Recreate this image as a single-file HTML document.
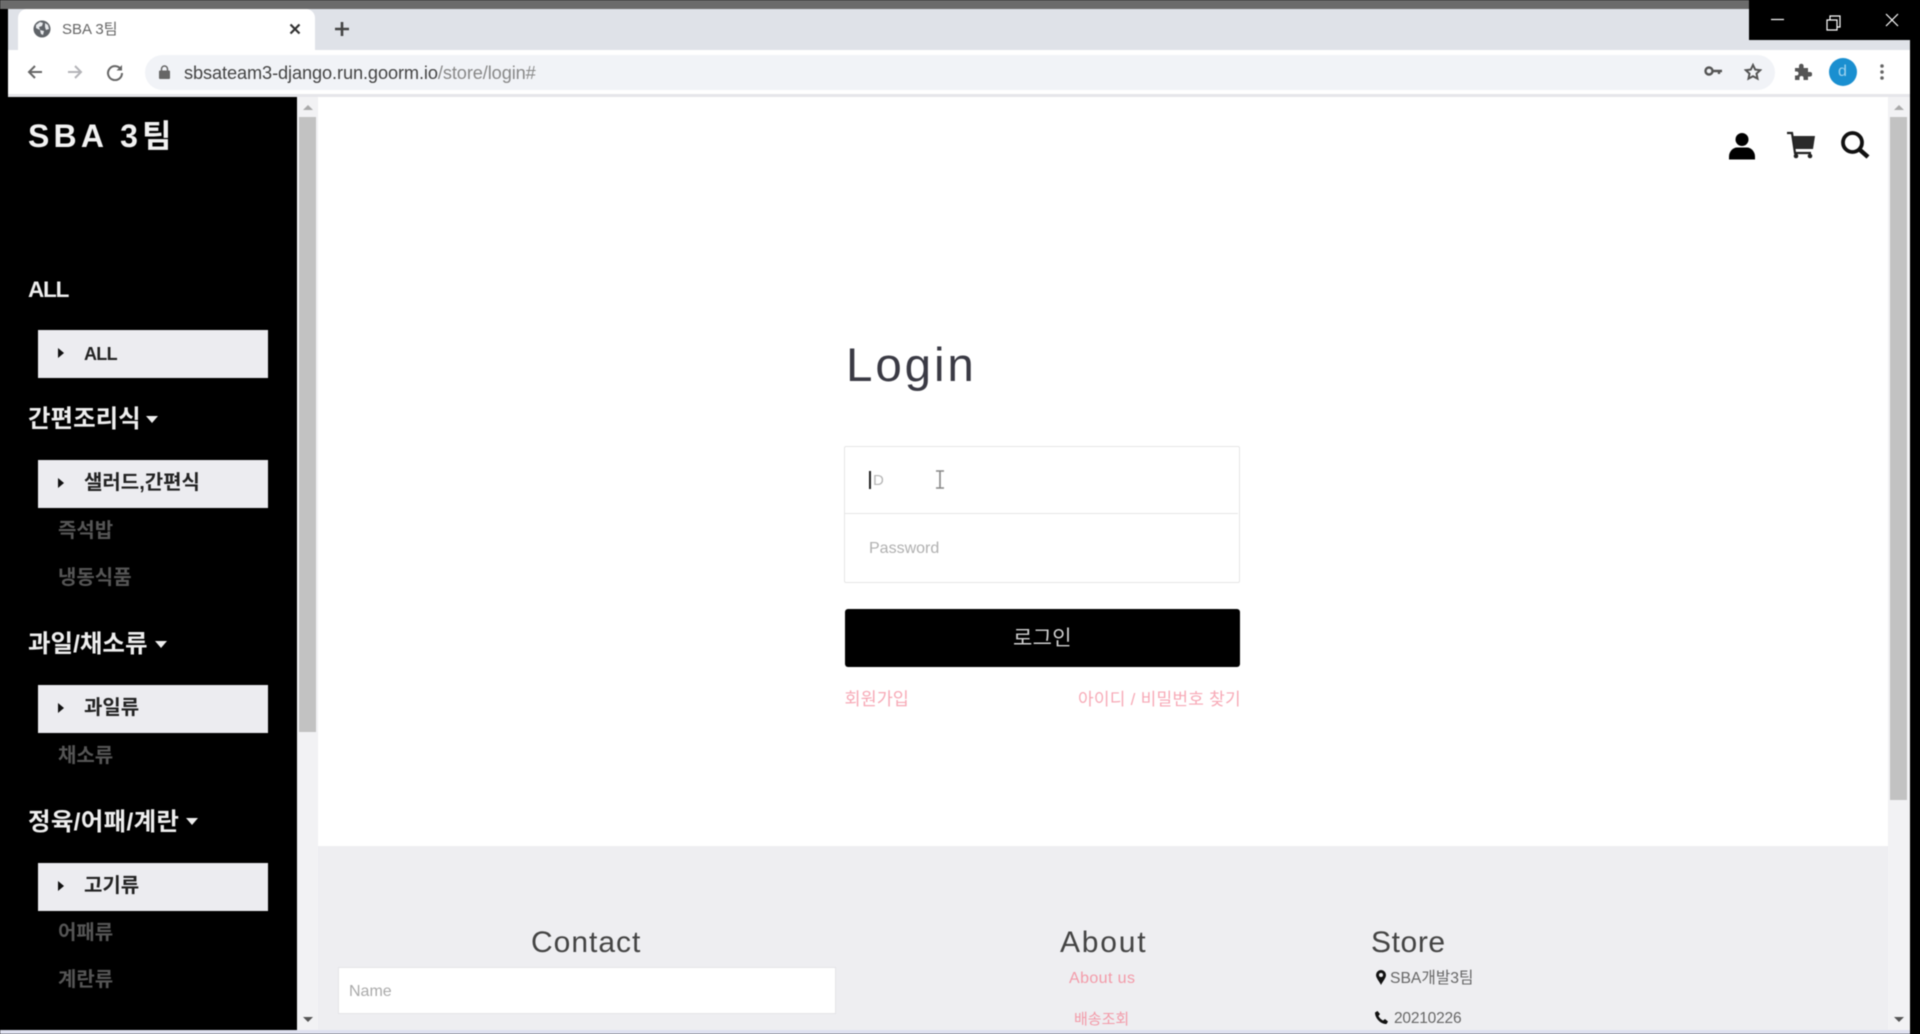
<!DOCTYPE html>
<html lang="ko"><head><meta charset="utf-8"><title>SBA 3팀</title>
<style>
html,body{margin:0;padding:0;width:1920px;height:1034px;overflow:hidden;background:#000}
body{position:relative;font-family:"Liberation Sans","Noto Sans CJK KR",sans-serif;filter:blur(.45px)}
.a{position:absolute}
.t{position:absolute;white-space:nowrap;line-height:1}
.box{position:absolute;left:38px;width:230px;height:48px;background:#ececf0}
.tri{position:absolute;left:58px;width:0;height:0;border-left:6px solid #111;border-top:5px solid transparent;border-bottom:5px solid transparent}
.cat{color:#eee;font-size:24.5px;font-weight:700;left:28px}
.sub{font-size:20px;font-weight:700;left:84px;color:#222}
.mut{color:#555;font-size:20px;font-weight:700;left:58px}
.car{position:absolute;width:0;height:0;border-top:7px solid #eee;border-left:6.5px solid transparent;border-right:6.5px solid transparent}
.ft{color:#444;font-size:30px;letter-spacing:.8px}
.pk{color:#f39aa8;font-size:15px}
</style></head><body>

<!-- window frame -->
<div class="a" style="left:0;top:0;width:1920px;height:9px;background:#6b6b6b"></div>
<div class="a" style="left:8px;top:9px;width:1902px;height:41px;background:#dfe2e8"></div>
<div class="a" style="left:1749px;top:0;width:171px;height:40px;background:#000"></div>
<div class="a" style="left:1910px;top:40px;width:10px;height:994px;background:#000"></div>

<!-- window controls -->
<svg class="a" style="left:1749px;top:0" width="171" height="40" fill="none" stroke="#fff" stroke-width="1.2">
<path d="M22 19.5H35"/>
<path d="M78 20h10v10h-10zM81 20v-4h10v11h-3"/>
<path d="M137 14l12 12M149 14l-12 12"/>
</svg>

<!-- tab -->
<div class="a" style="left:18px;top:9px;width:297px;height:41px;background:#fff;border-radius:9px 9px 0 0"></div>
<svg class="a" style="left:33px;top:20px" width="18" height="18" viewBox="0 0 18 18">
<circle cx="9" cy="9" r="8.5" fill="#5f6368"/>
<path d="M3 5l4-3 3 1-1 3-3 1 1 3 4 1-1 4-2-1-1-4-4-2zM12 3l3 2 1 4-3 1-1-3z" fill="#e8eaed"/>
</svg>
<div class="t" style="left:62px;top:22px;font-size:15px;color:#666">SBA 3팀</div>
<svg class="a" style="left:289px;top:23px" width="12" height="12" stroke="#333" stroke-width="2.2"><path d="M1.5 1.5l9 9M10.5 1.5l-9 9"/></svg>
<svg class="a" style="left:334px;top:21px" width="16" height="16" stroke="#444" stroke-width="2.6"><path d="M8 1v14M1 8h14"/></svg>

<!-- toolbar -->
<div class="a" style="left:8px;top:50px;width:1902px;height:45px;background:#fff"></div>
<div class="a" style="left:8px;top:94px;width:1902px;height:3px;background:#e6e6ea"></div>
<div class="a" style="left:145px;top:55px;width:1630px;height:35px;border-radius:18px;background:#f1f3f7"></div>
<svg class="a" style="left:26px;top:63px" width="18" height="18" fill="none" stroke="#666" stroke-width="2"><path d="M16 9H3M9 3L3 9l6 6"/></svg>
<svg class="a" style="left:66px;top:63px" width="18" height="18" fill="none" stroke="#b4b4b8" stroke-width="2"><path d="M2 9h13M9 3l6 6-6 6"/></svg>
<svg class="a" style="left:106px;top:63px" width="18" height="18" fill="none" stroke="#666" stroke-width="2"><path d="M15 6.5A7 7 0 1 0 16 10"/><path d="M16 2v5.5h-5.500z" fill="#666" stroke="none"/></svg>
<svg class="a" style="left:159px;top:65px" width="11" height="14" fill="#666"><rect x="0" y="5.500" width="11" height="8.500" rx="1"/><path d="M2.500 6V4a3 3 0 0 1 6 0v2" fill="none" stroke="#666" stroke-width="1.500"/></svg>
<div class="t" style="left:184px;top:63.500px;font-size:18.200px;letter-spacing:-.1px;color:#444">sbsateam3-django.run.goorm.io<span style="color:#888">/store/login#</span></div>

<svg class="a" style="left:1704px;top:65px" width="19" height="14" fill="none" stroke="#555" stroke-width="2.400"><circle cx="5" cy="6" r="3.500"/><path d="M8 6h10M15 6v3"/></svg>
<svg class="a" style="left:1744px;top:63px" width="18" height="18" fill="none" stroke="#555" stroke-width="2"><path d="M9 2l2.200 4.600 5 .6-3.700 3.400 1 5L9 13.200 4.500 15.600l1-5L1.800 7.200l5-.6z"/></svg>
<svg class="a" style="left:1794px;top:63px" width="18" height="18" fill="#555"><path d="M1 5h4V3a2.300 2.300 0 0 1 4.600 0v2h4.400v4h2a2.300 2.300 0 0 1 0 4.600h-2V17H9.500v-2a2 2 0 0 0-4 0v2H1v-4.500h1.500a2 2 0 0 0 0-4H1z"/></svg>
<div class="a" style="left:1829px;top:58px;width:28px;height:28px;border-radius:50%;background:#1a8fd0"></div>
<div class="t" style="left:1838px;top:64px;font-size:16px;color:#9fd3ef">d</div>
<svg class="a" style="left:1879px;top:63px" width="6" height="18" fill="#666"><circle cx="3" cy="3" r="1.800"/><circle cx="3" cy="9" r="1.800"/><circle cx="3" cy="15" r="1.800"/></svg>

<!-- sidebar -->
<div class="a" style="left:0;top:97px;width:297px;height:933px;background:#000"></div>
<div class="t" style="left:28px;top:120px;font-size:32px;font-weight:700;letter-spacing:4.200px;color:#f2f2f2">SBA 3팀</div>

<div class="t cat" style="top:278.500px;font-size:22.500px;letter-spacing:-1.200px">ALL</div>
<div class="box" style="top:330px"></div><div class="tri" style="top:348px"></div>
<div class="t sub" style="top:345px;font-size:18px;letter-spacing:-.7px">ALL</div>

<div class="t cat" style="top:408px">간편조리식</div>
<div class="car" style="left:146px;top:415.500px"></div>
<div class="box" style="top:460px"></div><div class="tri" style="top:478px"></div>
<div class="t sub" style="top:473px">샐러드,간편식</div>
<div class="t mut" style="top:521px">즉석밥</div>
<div class="t mut" style="top:568px">냉동식품</div>

<div class="t cat" style="top:633px">과일/채소류</div>
<div class="car" style="left:155px;top:640.500px"></div>
<div class="box" style="top:685px"></div><div class="tri" style="top:703px"></div>
<div class="t sub" style="top:698px">과일류</div>
<div class="t mut" style="top:745.500px">채소류</div>

<div class="t cat" style="top:810.500px;letter-spacing:.3px">정육/어패/계란</div>
<div class="car" style="left:186px;top:818px"></div>
<div class="box" style="top:862.500px"></div><div class="tri" style="top:880.500px"></div>
<div class="t sub" style="top:875.500px">고기류</div>
<div class="t mut" style="top:922.500px">어패류</div>
<div class="t mut" style="top:970px">계란류</div>

<!-- page background -->
<div class="a" style="left:297px;top:97px;width:1613px;height:933px;background:#eeeef1"></div>
<div class="a" style="left:318px;top:97px;width:1570px;height:749px;background:#fff"></div>
<div class="a" style="left:0;top:1030px;width:1910px;height:4px;background:#dfe1f0"></div>

<!-- left scrollbar -->
<div class="a" style="left:297px;top:97px;width:21px;height:933px;background:#f2f2f4"></div>
<div class="a" style="left:299px;top:117px;width:17px;height:615px;background:#c2c2c2"></div>
<div class="a" style="left:303px;top:105px;border-bottom:5px solid #aaa;border-left:5px solid transparent;border-right:5px solid transparent"></div>
<div class="a" style="left:303px;top:1017px;border-top:5px solid #555;border-left:5px solid transparent;border-right:5px solid transparent"></div>

<!-- right scrollbar -->
<div class="a" style="left:1888px;top:97px;width:22px;height:933px;background:#f2f2f4"></div>
<div class="a" style="left:1890px;top:117px;width:17px;height:683px;background:#c2c2c2"></div>
<div class="a" style="left:1894px;top:105px;border-bottom:5px solid #aaa;border-left:5px solid transparent;border-right:5px solid transparent"></div>
<div class="a" style="left:1894px;top:1017px;border-top:5px solid #555;border-left:5px solid transparent;border-right:5px solid transparent"></div>

<!-- header icons -->
<svg class="a" style="left:1728px;top:130px" width="28" height="32" fill="#000"><circle cx="14" cy="9.500" r="6.500"/><path d="M1 29.500v-3c0-5 4-9 8-9h10c4 0 8 4 8 9v3z"/></svg>
<svg class="a" style="left:1785.500px;top:130px" width="30" height="30"><path d="M1 3h5l3 20h16" fill="none" stroke="#222" stroke-width="2.200"/><path d="M7 6h22l-2 13H9z" fill="#2a2a2a"/><circle cx="10" cy="26" r="2.300" fill="#222"/><circle cx="24" cy="26" r="2.300" fill="#222"/></svg>
<svg class="a" style="left:1840px;top:130px" width="30" height="30" fill="none" stroke="#111"><circle cx="12.500" cy="12.500" r="9.500" stroke-width="3.800"/><path d="M19.500 19.500l8.500 7.500" stroke-width="4.500"/></svg>

<!-- login -->
<div class="t" style="left:846px;top:341.500px;font-size:47.500px;letter-spacing:2.900px;color:#3a3a44">Login</div>
<div class="a" style="left:844px;top:446px;width:394px;height:135px;border:1px solid #e6e6e6;border-radius:2px"></div>
<div class="a" style="left:845px;top:513px;width:393px;height:1px;background:#e6e6e6"></div>
<div class="a" style="left:869px;top:471px;width:2px;height:18px;background:#222"></div>
<div class="t" style="left:873px;top:473px;font-size:15px;color:#b5b5b5">D</div>
<svg class="a" style="left:934.500px;top:470px" width="10" height="19" fill="none" stroke="#888" stroke-width="1.600"><path d="M1 1h8M5 1v17M1 18h8"/></svg>
<div class="t" style="left:869px;top:541px;font-size:16px;color:#b0b0b0">Password</div>
<div class="a" style="left:844.500px;top:609px;width:395.500px;height:58px;background:#000;border-radius:3px"></div>
<div class="t" style="left:1013px;top:627.500px;font-size:21px;color:#d0d0d0;letter-spacing:.3px">로그인</div>
<div class="t" style="left:844.500px;top:690.500px;font-size:17.500px;color:#f7a9b6">회원가입</div>
<div class="t" style="left:1078px;top:691px;font-size:17px;color:#f7a9b6;letter-spacing:.25px">아이디 / 비밀번호 찾기</div>

<!-- footer -->
<div class="t ft" style="left:531px;top:928px;letter-spacing:1px">Contact</div>
<div class="a" style="left:339px;top:968px;width:495.500px;height:45px;background:#fff;box-shadow:0 0 0 1px #e4e4e8"></div>
<div class="t" style="left:349px;top:984px;font-size:16px;color:#aaa">Name</div>

<div class="t ft" style="left:1060px;top:928px;letter-spacing:1.800px">About</div>
<div class="t pk" style="left:1069px;top:971px;font-size:16px;letter-spacing:.4px">About us</div>
<div class="t pk" style="left:1074px;top:1011.500px">배송조회</div>

<div class="t ft" style="left:1371px;top:928px;letter-spacing:.6px">Store</div>
<svg class="a" style="left:1376px;top:970px" width="10" height="15" fill="#111"><path fill-rule="evenodd" d="M5 0a5 5 0 0 1 5 5c0 3-3 6-5 10C3 11 0 8 0 5a5 5 0 0 1 5-5zm0 3a2 2 0 1 0 0 4 2 2 0 0 0 0-4z"/></svg>
<div class="t" style="left:1390px;top:970.500px;font-size:15.700px;color:#666">SBA개발3팀</div>
<svg class="a" style="left:1375px;top:1011px" width="13" height="13" fill="#111"><path d="M2.500 0L5 3 3.500 5c1 2 2.500 3.500 4.500 4.500L10 8l3 2.500-1.500 2.500C6 13.500 0 7.500 0 1.500z"/></svg>
<div class="t" style="left:1394px;top:1011px;font-size:15.500px;letter-spacing:-.2px;color:#666">20210226</div>
</body></html>
